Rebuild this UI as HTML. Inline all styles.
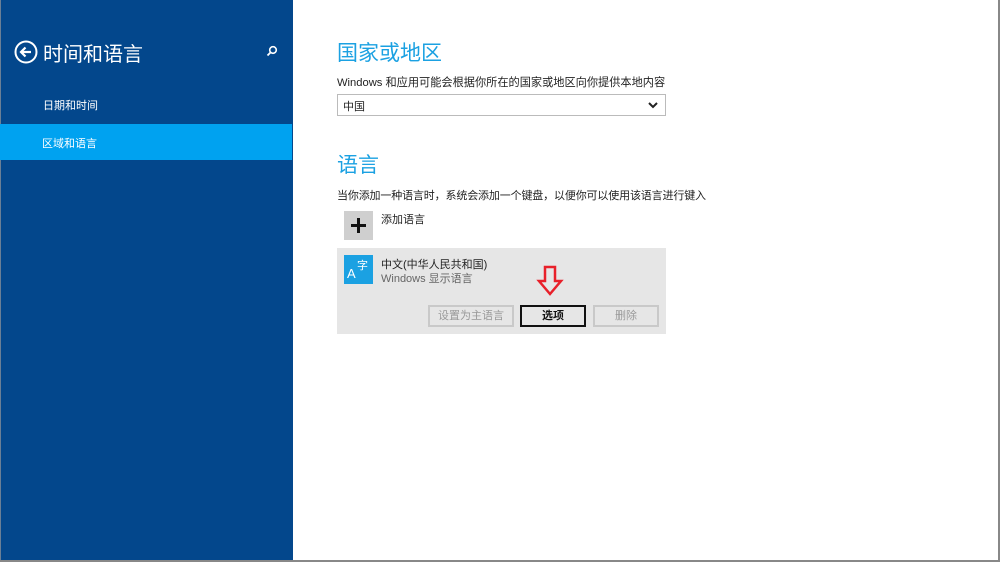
<!DOCTYPE html>
<html><head><meta charset="utf-8"><style>
*{margin:0;padding:0;box-sizing:border-box}
body{width:1000px;height:562px;overflow:hidden;background:#fff;font-family:"Liberation Sans","Noto Sans CJK SC",sans-serif;position:relative}
.side{position:absolute;left:0;top:0;width:293px;height:562px;background:#03478c;border-left:1px solid #6a7f96}
.t{position:absolute;color:#fff}
.sel{position:absolute;left:0;top:124px;width:292px;height:36px;background:#00a2f0}
.frame{position:absolute;left:0;bottom:0;width:1000px;height:2px;background:#888}
.frame2{position:absolute;right:0;top:0;width:2px;height:562px;background:#888}
h2{position:absolute;font-weight:normal;color:#1ba1e2;font-size:21px}
.p{position:absolute;font-size:11px;color:#222}
.btn{position:absolute;top:305px;height:22px;border:2px solid #c9c9c9;font-size:11px;color:#999;text-align:center;line-height:18px}
</style></head><body>
<div class="side">
<svg class="t" style="left:13px;top:40px" width="24" height="24" viewBox="0 0 24 24"><circle cx="12" cy="12" r="10.5" fill="none" stroke="#fff" stroke-width="2"/><path d="M17 12H7M11.5 7.5L7 12l4.5 4.5" fill="none" stroke="#fff" stroke-width="2.2"/></svg>
<div class="t" style="left:42px;top:38px;font-size:20px">时间和语言</div>
<svg class="t" style="left:265px;top:45px" width="12" height="12" viewBox="0 0 12 12"><circle cx="7" cy="5" r="3.3" fill="none" stroke="#fff" stroke-width="1.6"/><path d="M4.6 7.4L1.5 10.5" stroke="#fff" stroke-width="1.8"/></svg>
<div class="t" style="left:42px;top:97px;font-size:11px">日期和时间</div>
</div>
<div class="sel"></div>
<div class="t" style="left:42px;top:135px;font-size:11px">区域和语言</div>
<h2 style="left:337px;top:37px">国家或地区</h2>
<div class="p" style="left:337px;top:74px;font-size:11.2px">Windows 和应用可能会根据你所在的国家或地区向你提供本地内容</div>
<div style="position:absolute;left:337px;top:94px;width:329px;height:22px;border:1px solid #bbb"></div>
<div class="p" style="left:343px;top:98px">中国</div>
<svg style="position:absolute;left:648px;top:101px" width="10" height="8" viewBox="0 0 10 8"><path d="M1 2l4 4 4-4" fill="none" stroke="#222" stroke-width="2"/></svg>
<h2 style="left:337px;top:149px">语言</h2>
<div class="p" style="left:337px;top:187px;letter-spacing:-0.15px">当你添加一种语言时，系统会添加一个键盘，以便你可以使用该语言进行键入</div>
<div style="position:absolute;left:344px;top:211px;width:29px;height:29px;background:#cfcfcf"><div style="position:absolute;left:7px;top:13px;width:15px;height:3px;background:#111"></div><div style="position:absolute;left:13px;top:7px;width:3px;height:15px;background:#111"></div></div>
<div class="p" style="left:381px;top:211px">添加语言</div>
<div style="position:absolute;left:337px;top:248px;width:329px;height:86px;background:#e6e6e6"></div>
<div style="position:absolute;left:344px;top:255px;width:29px;height:29px;background:#1ba1e2;color:#fff"><span style="position:absolute;left:3px;top:11px;font-size:13px">A</span><span style="position:absolute;left:13px;top:2px;font-size:11px">字</span></div>
<div class="p" style="left:381px;top:256px">中文(中华人民共和国)</div>
<div class="p" style="left:381px;top:270px;color:#666">Windows 显示语言</div>
<svg style="position:absolute;left:536px;top:265px" width="28" height="32" viewBox="0 0 28 32"><path d="M9 2h10v14h6L14 29 3 16h6z" fill="none" stroke="#e8202a" stroke-width="2.5" stroke-linejoin="miter"/></svg>
<div class="btn" style="left:428px;width:86px">设置为主语言</div>
<div class="btn" style="left:520px;width:66px;border-color:#111;color:#111;font-weight:bold">选项</div>
<div class="btn" style="left:593px;width:66px">删除</div>
<div class="frame"></div><div class="frame2"></div>
</body></html>
